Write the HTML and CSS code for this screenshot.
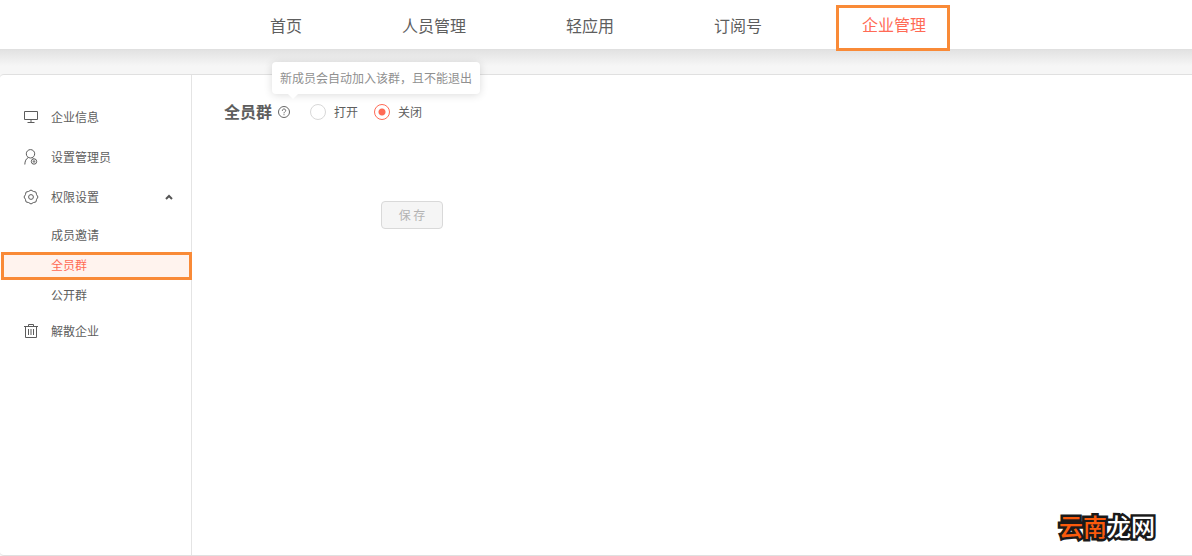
FILE: index.html
```html
<!DOCTYPE html>
<html lang="zh-CN">
<head>
<meta charset="utf-8">
<title>企业管理</title>
<link rel="stylesheet" href="styles.css">
</head>
<body>
<header class="topbar">
  <nav class="topnav">
    <a class="topnav-link" href="#">首页</a>
    <a class="topnav-link" href="#">人员管理</a>
    <a class="topnav-link" href="#">轻应用</a>
    <a class="topnav-link" href="#">订阅号</a>
    <a class="topnav-link topnav-active" href="#">企业管理</a>
  </nav>
</header>
<main class="panel">
  <nav class="sidebar">
    <a class="side-link" href="#">
      <svg class="icon" viewBox="0 0 16 16"><path d="M1.500 2.500h13v8h-13zM8 10.500v3M4.500 13.500h7"/></svg>
      企业信息
    </a>
    <a class="side-link" href="#">
      <svg class="icon" viewBox="0 0 16 16"><circle cx="7.500" cy="4.800" r="4.200"/><path d="M5.300 8.500C3 9.800 2 12 1.800 15.500M9.300 8.600l1.200.8"/><circle cx="11" cy="12.500" r="2.700"/><circle cx="11" cy="12.500" r=".8"/></svg>
      设置管理员
    </a>
    <a class="side-link" href="#">
      <svg class="icon" viewBox="0 0 16 16"><path d="M5.700 2.400Q8 -.4 10.300 2.400Q13.900 2.100 13.600 5.700Q16.400 8 13.600 10.300Q13.900 13.900 10.300 13.600Q8 16.400 5.700 13.600Q2.100 13.900 2.400 10.300Q-.4 8 2.400 5.700Q2.100 2.100 5.700 2.400Z"/><circle cx="8" cy="8" r="2.400"/></svg>
      权限设置
      <svg class="chevron" viewBox="0 0 8 6"><path d="M1 5l3-3 3 3"/></svg>
    </a>
    <div class="submenu">
      <a class="sub-link" href="#">成员邀请</a>
      <a class="sub-link sub-active" href="#">全员群</a>
      <a class="sub-link" href="#">公开群</a>
    </div>
    <a class="side-link" href="#">
      <svg class="icon" viewBox="0 0 16 16"><path d="M1 3.500h14M5.500 3.500v-2h5v2M2.500 3.500v11h11v-11M5.500 6v6M8 6v6M10.500 6v6"/></svg>
      解散企业
    </a>
  </nav>
  <form class="content">
    <div class="setting" role="radiogroup" aria-labelledby="group-title">
      <h1 class="title" id="group-title">全员群</h1>
      <span class="help">
        <svg class="help-icon" viewBox="0 0 12 12"><circle cx="6" cy="6" r="5.500"/><path d="M4.300 4.800C4.300 2.400 7.700 2.400 7.700 4.600C7.700 5.800 6 5.800 6 7.300M6 8.200v1"/></svg>
        <span class="tooltip" role="tooltip">新成员会自动加入该群，且不能退出</span>
      </span>
      <label class="option"><input class="radio" type="radio" name="group">打开</label>
      <label class="option"><input class="radio" type="radio" name="group" checked>关闭</label>
    </div>
    <button class="save" type="button" disabled>保 存</button>
  </form>
</main>
<div class="brand"><span class="brand-hot">云南</span>龙网</div>
</body>
</html>
```
FILE: styles.css
```css
* {
  box-sizing: border-box;
}

body {
  margin: 0;
  min-height: 100vh;
  display: flex;
  flex-direction: column;
  background: #f6f6f6;
  color: #5e5e5e;
  font: 12px/20px "Noto Sans CJK SC", sans-serif;
}

a {
  color: inherit;
  text-decoration: none;
}

.topbar {
  position: relative;
  z-index: 1;
  height: 50px;
  padding-left: 2px;
  background: #fff;
  border-bottom: 1px solid #e0e0e0;
}

.topnav {
  display: flex;
  justify-content: center;
  gap: 48px;
}

.topnav-link {
  padding: 13px 26px 12px;
  font-size: 16px;
  line-height: 24px;
}

.topnav-active {
  height: 46px;
  margin: 5px 0 -2px;
  padding: 4px 21px 0 23px;
  border: 3px solid #f98a37;
  color: #ff6a55;
}

.panel {
  flex: 1;
  display: flex;
  position: relative;
  border-top: 1px solid #e0e0e0;
  border-bottom: 1px solid #e0e0e0;
  border-radius: 4px 0 0 4px;
  margin-top: 24px;
  background: #fff;
}

.panel::before {
  content: "";
  position: absolute;
  left: 0;
  right: 0;
  top: -25px;
  height: 16px;
  background: linear-gradient(#e2e2e2, #f6f6f6);
}

.sidebar {
  width: 192px;
  flex: none;
  padding-top: 22px;
  border-right: 1px solid #e4e4e4;
}

.side-link {
  display: flex;
  align-items: center;
  gap: 12px;
  height: 40px;
  padding: 0 18px 0 23px;
}

.icon {
  width: 16px;
  height: 16px;
  fill: none;
  stroke: #5c5c5c;
}

.chevron {
  width: 8px;
  height: 6px;
  margin-left: auto;
  fill: none;
  stroke: #555;
  stroke-width: 2;
}

.submenu {
  padding: 3px 0 1px;
}

.sub-link {
  display: block;
  padding-left: 51px;
  line-height: 30px;
}

.sub-active {
  margin: 2px -1px 0 1px;
  padding: 0 0 2px 47px;
  border: 3px solid #f98a37;
  background: #fff3ee;
  color: #ff6a55;
  line-height: 20px;
}

.content {
  flex: 1;
  padding: 25px 32px;
}

.setting {
  display: flex;
  align-items: center;
}

.title {
  margin: 0 6px 0 0;
  padding-bottom: 2px;
  font-size: 16px;
  line-height: 22px;
}

.help {
  display: flex;
  position: relative;
  margin-right: 4px;
}

.help-icon {
  width: 12px;
  height: 12px;
  fill: none;
  stroke: #666;
}

.tooltip {
  position: absolute;
  left: -6px;
  bottom: 24px;
  padding: 6px 8px;
  border-radius: 4px;
  background: #fff;
  box-shadow: 0 1px 8px rgba(0, 0, 0, 0.14);
  color: #909090;
  white-space: nowrap;
}

.tooltip::after {
  content: "";
  position: absolute;
  left: 16px;
  top: 100%;
  border: 5px solid transparent;
  border-top-color: #fff;
  border-bottom: 0;
}

.option {
  display: flex;
  align-items: center;
  gap: 8px;
  margin-left: 16px;
}

.radio {
  appearance: none;
  width: 16px;
  height: 16px;
  margin: 0;
  border: 1px solid #d8d8d8;
  border-radius: 50%;
  background: #fff;
}

.radio:checked {
  border-color: #ff6a55;
  background: radial-gradient(circle, #ff6a55 3px, #fff 4px);
}

.save {
  display: block;
  width: 62px;
  height: 28px;
  margin: 77px 0 0 157px;
  padding: 0;
  border: 1px solid #d9d9d9;
  border-radius: 4px;
  background: #f5f5f5;
  color: #b3b3b3;
  font: inherit;
}

.brand {
  position: absolute;
  right: 37px;
  bottom: 14px;
  color: #fff;
  font-size: 24px;
  font-weight: 500;
  line-height: 32px;
  -webkit-text-stroke: 5px #1a1a1a;
  paint-order: stroke fill;
}

.brand-hot {
  color: #f95a0c;
}
```
